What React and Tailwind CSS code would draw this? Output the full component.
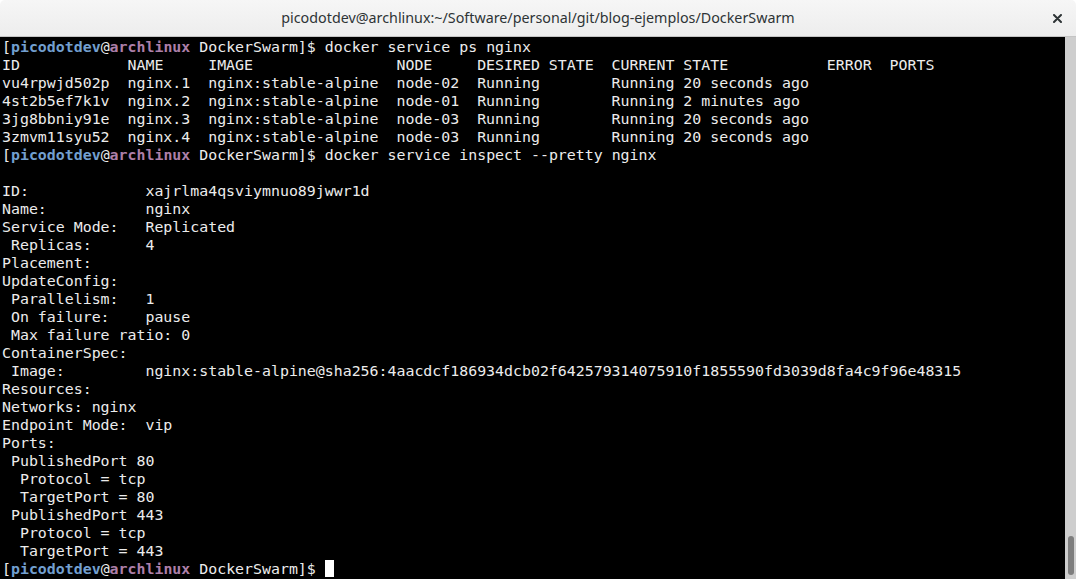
import React from "react";

const cols = (parts, widths) =>
  parts.map((p, i) => (i < widths.length ? p.padEnd(widths[i]) : p)).join("");

const psWidths = [14, 9, 21, 9, 15, 24, 7];

const rows = [
  ["vu4rpwjd502p", "nginx.1", "nginx:stable-alpine", "node-02", "Running", "Running 20 seconds ago"],
  ["4st2b5ef7k1v", "nginx.2", "nginx:stable-alpine", "node-01", "Running", "Running 2 minutes ago"],
  ["3jg8bbniy91e", "nginx.3", "nginx:stable-alpine", "node-03", "Running", "Running 20 seconds ago"],
  ["3zmvm11syu52", "nginx.4", "nginx:stable-alpine", "node-03", "Running", "Running 20 seconds ago"],
];

const inspect = [
  "",
  "ID:             xajrlma4qsviymnuo89jwwr1d",
  "Name:           nginx",
  "Service Mode:   Replicated",
  " Replicas:      4",
  "Placement:",
  "UpdateConfig:",
  " Parallelism:   1",
  " On failure:    pause",
  " Max failure ratio: 0",
  "ContainerSpec:",
  " Image:         nginx:stable-alpine@sha256:4aacdcf186934dcb02f642579314075910f1855590fd3039d8fa4c9f96e48315",
  "Resources:",
  "Networks: nginx",
  "Endpoint Mode:  vip",
  "Ports:",
  " PublishedPort 80",
  "  Protocol = tcp",
  "  TargetPort = 80",
  " PublishedPort 443",
  "  Protocol = tcp",
  "  TargetPort = 443",
];

function Prompt({ cmd, cursor }) {
  return (
    <div className="h-[18px] whitespace-pre">
      [<span className="font-bold text-[#729fcf]">picodotdev</span>@
      <span className="font-bold text-[#ad7fa8]">archlinux</span> DockerSwarm]$ {cmd}
      {cursor && <span className="inline-block w-[9px] h-[17px] bg-white align-[-3px]" />}
    </div>
  );
}

function Line({ children }) {
  return <div className="h-[18px] whitespace-pre">{children}</div>;
}

export default function App() {
  return (
    <div className="w-[1076px] h-[579px] flex flex-col overflow-hidden bg-white">
      {/* title bar */}
      <div className="h-[37px] shrink-0 relative flex items-center justify-center rounded-t-[5px] bg-gradient-to-b from-[#f6f6f6] to-[#ededed] border-b border-[#c4c4c4]">
        <span className="text-[14.3px] text-[#2e3436] font-['Noto_Sans',sans-serif]">
          picodotdev@archlinux:~/Software/personal/git/blog-ejemplos/DockerSwarm
        </span>
        <svg className="absolute right-[14px] top-[14px]" width="9" height="9" viewBox="0 0 9 9">
          <path d="M1 1 L8 8 M8 1 L1 8" stroke="#2e3436" strokeWidth="2" strokeLinecap="round" />
        </svg>
      </div>

      <div className="flex flex-1 min-h-0">
        {/* terminal */}
        <div className="flex-1 bg-black pl-[2px] pt-[1px] text-[14.9px] leading-[18px] text-[#ececec] font-['DejaVu_Sans_Mono',monospace]">
          <Prompt cmd="docker service ps nginx" />
          <Line>{cols(["ID", "NAME", "IMAGE", "NODE", "DESIRED STATE", "CURRENT STATE", "ERROR", "PORTS"], psWidths)}</Line>
          {rows.map((r) => (
            <Line key={r[0]}>{cols(r, psWidths)}</Line>
          ))}
          <Prompt cmd="docker service inspect --pretty nginx" />
          {inspect.map((l, i) => (
            <Line key={i}>{l}</Line>
          ))}
          <Prompt cmd="" cursor />
        </div>

        {/* scrollbar */}
        <div className="w-[11px] bg-[#cecece] flex flex-col justify-end items-center pb-[4px]">
          <div className="w-[6px] h-[39px] rounded-full bg-[#7e7e7e]" />
        </div>
      </div>
    </div>
  );
}
